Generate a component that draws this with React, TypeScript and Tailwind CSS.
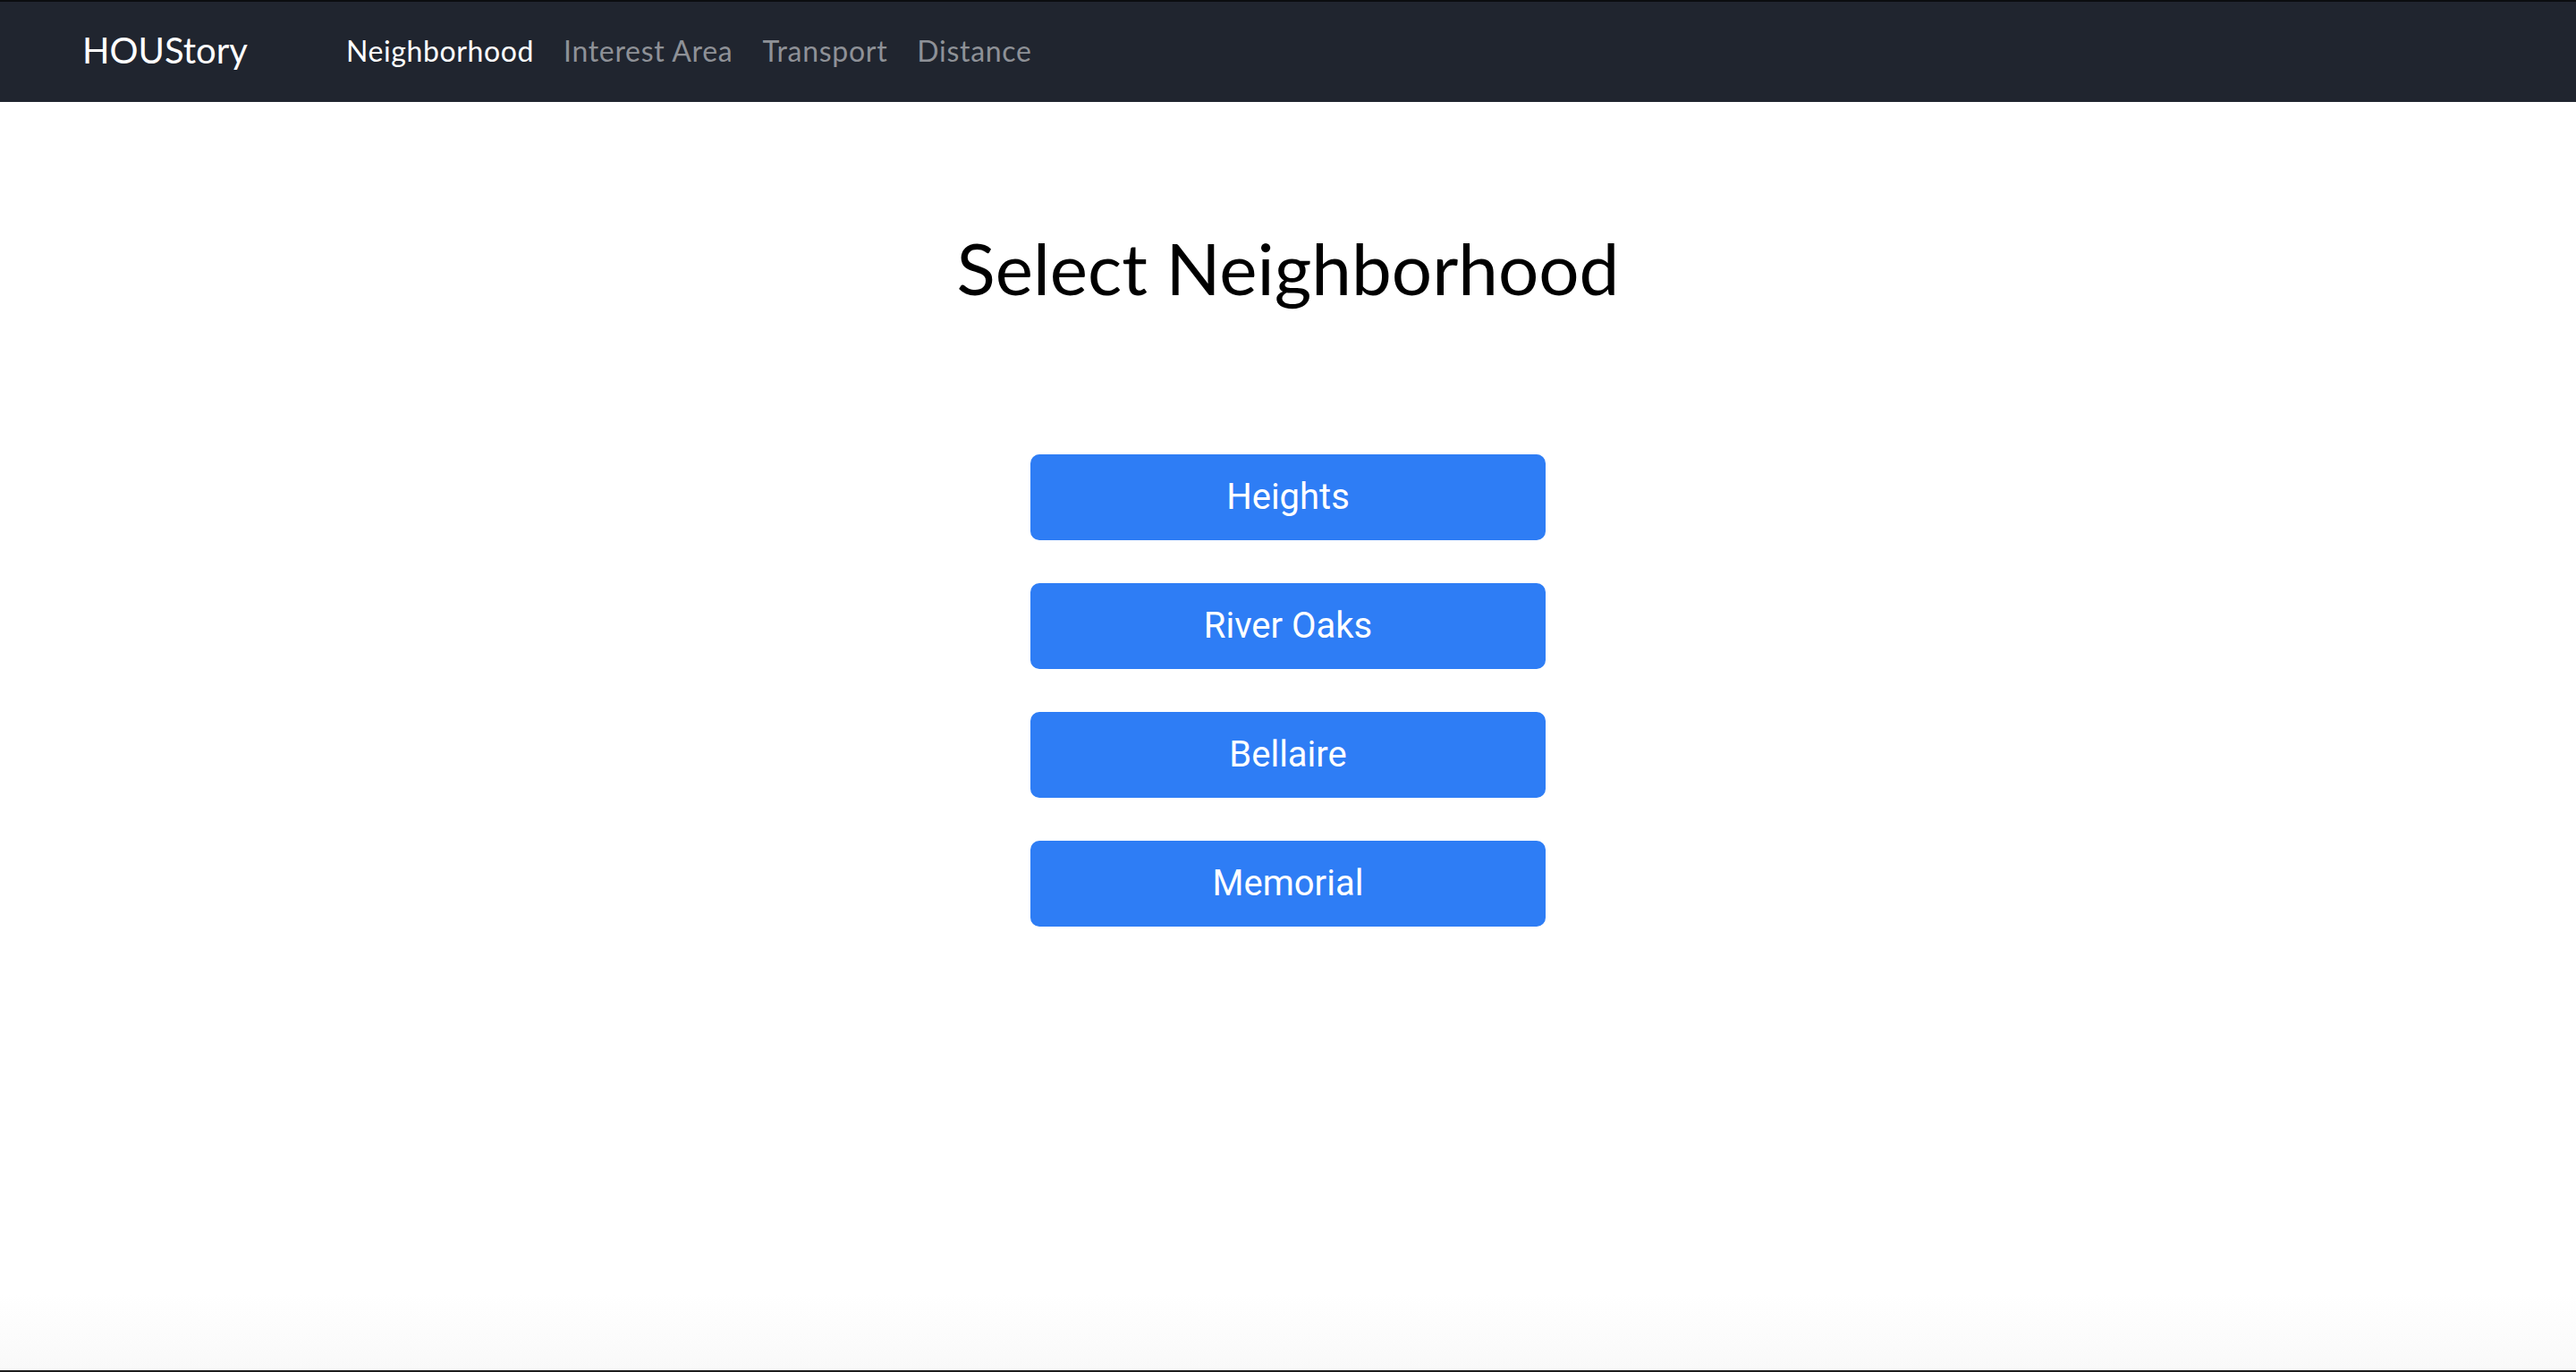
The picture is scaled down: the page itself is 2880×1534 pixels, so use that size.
import { useState } from "react";

const links = ["Neighborhood", "Interest Area", "Transport", "Distance"];
const neighborhoods = ["Heights", "River Oaks", "Bellaire", "Memorial"];

function Navbar({ active, onSelect }: { active: string, onSelect: (link: string) => void }) {
    return (
        <nav className="w-full h-[114px] bg-[#20252f] border-t-2 border-[#0b0d10] flex items-center pl-[92px]">
            <a className="w-[295px] text-[40px] leading-none text-white pb-[4px]" href="#">HOUStory</a>

            <ul className="flex items-center gap-[33px]">
                {links.map((link) => (
                    <li key={link}>
                        <a
                            href="#"
                            onClick={() => onSelect(link)}
                            className={link === active ? "text-[32px] leading-none tracking-[0.6px] text-white" : "text-[32px] leading-none tracking-[0.7px] text-[#8e9197]"}
                        >
                            {link}
                        </a>
                    </li>
                ))}
            </ul>
        </nav>
    );
};

function App() {
    const [active, setActive] = useState("Neighborhood");

    return (
        <div className="w-full h-[1534px] bg-white flex flex-col border-b-2 border-[#1c1c1c] font-['Lato',sans-serif]">
            <Navbar active={active} onSelect={setActive} />

            <main className="flex-1 flex flex-col items-center pt-[137px] bg-gradient-to-b from-white from-[94%] to-[#f9f9f9]">
                <h1 className="text-[80px] leading-[1.2] text-black">Select Neighborhood</h1>

                <div className="flex flex-col gap-[48px] mt-[161px]">
                    {neighborhoods.map((name) => (
                        <button
                            key={name}
                            className="w-[576px] h-[96px] rounded-[10px] bg-[#2e7df5] text-white text-[40px] font-['Roboto',sans-serif] flex items-center justify-center"
                        >
                            {name}
                        </button>
                    ))}
                </div>
            </main>
        </div>
    );
};

export default App;
